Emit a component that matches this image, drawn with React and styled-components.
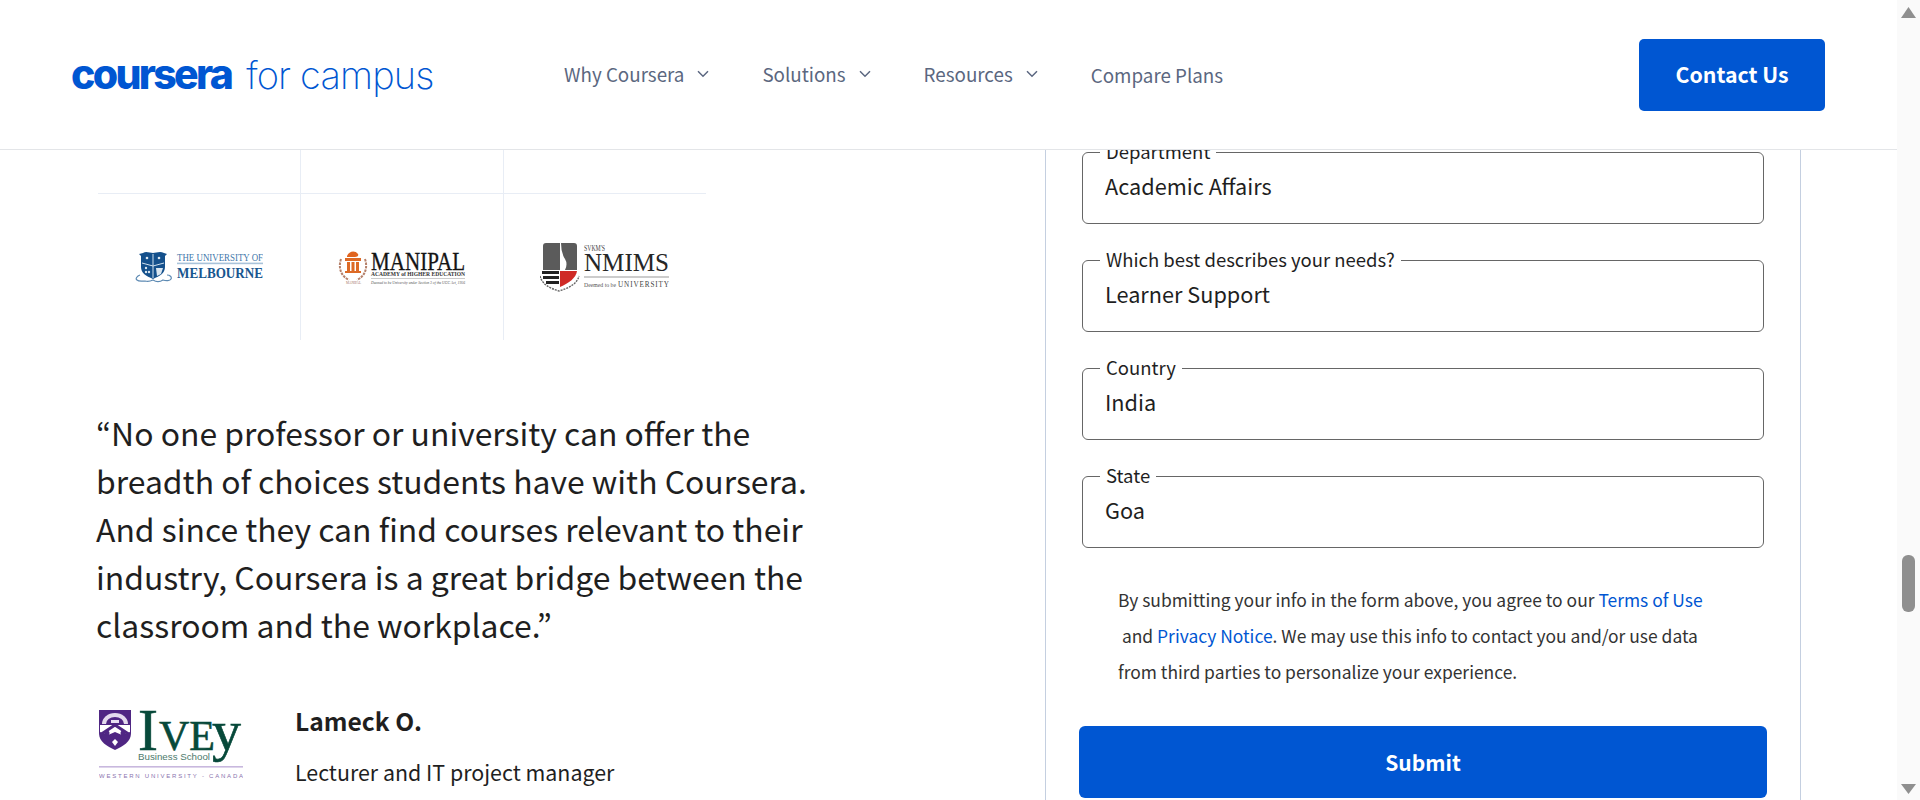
import React from "react";
import styled, { createGlobalStyle } from "styled-components";

const SANS = `"Noto Sans CJK KR", "Noto Sans", sans-serif`;

const Global = createGlobalStyle`
  html, body { margin: 0; padding: 0; height: 800px; overflow: hidden; background: #fff; }
  * { box-sizing: border-box; }
  body { font-family: ${SANS}; color: #1f1f1f; }
`;

const Shell = styled.div`display: flex; width: 1920px; height: 800px;`;
const Page = styled.div`width: 1897px; height: 800px; display: flex; flex-direction: column;`;

const Header = styled.header`
  height: 150px; flex: none; display: flex; align-items: center;
  padding: 0 72px; border-bottom: 1px solid #e3e5e8; background: #fff;
`;
const Brand = styled.div`display: flex; align-items: baseline; width: 360px; flex: none; white-space: nowrap; margin-top: -1px; margin-left: -1px;`;
const BrandBold = styled.span`
  font-family: "Inter", sans-serif; font-weight: 800; font-size: 41px; line-height: 48px;
  color: #0056d2; letter-spacing: -2.7px;
`;
const BrandLight = styled.span`
  font-family: "Inter", sans-serif; font-weight: 200; font-size: 38px; line-height: 48px;
  color: #0056d2; margin-left: 15px; letter-spacing: -.85px;
`;
const Nav = styled.nav`display: flex; align-items: center; gap: 53px; margin-left: 133px;`;
const NavItem = styled.a`
  display: flex; align-items: center; gap: 13px; font-size: 18.8px; line-height: 28px; color: #5b6780;
  margin-top: ${p => (p.$plain ? "1px" : "-1px")};
`;
const ContactButton = styled.button`
  margin-left: auto; width: 186px; height: 72px; border: 0; padding: 0 0 2px; border-radius: 5px; background: #0056d2;
  color: #fff; font: 700 21.3px/28px ${SANS};
`;

const Main = styled.main`flex: 1; display: flex; overflow: hidden; min-height: 0;`;
const Left = styled.section`width: 1045px; flex: none; padding-left: 98px;`;
const LogoGrid = styled.div`
  width: 608px; display: grid; grid-template-columns: 203px 203px 202px; grid-template-rows: 44px 146px;
`;
const LogoCell = styled.div`
  display: flex; align-items: center; justify-content: center;
  border-right: ${p => (p.$last ? "0" : "1px solid #e8edf5")};
  border-bottom: ${p => (p.$top ? "1px solid #e8edf5" : "0")};
`;
const Quote = styled.blockquote`
  margin: 68px 0 0 -2px; width: 720px; font-size: 31.9px; line-height: 48px; color: #1f1f1f;
`;
const Author = styled.div`display: flex; margin-top: 61px; margin-left: 1px;`;
const AuthorText = styled.div`margin-left: 52px; margin-top: -6px;`;
const AuthorName = styled.div`font-size: 24.6px; font-weight: 700; line-height: 34px; color: #1f1f1f;`;
const AuthorRole = styled.div`font-size: 21.4px; line-height: 30px; margin-top: 20px; color: #1f1f1f;`;

const Card = styled.section`
  width: 756px; flex: none; border-left: 1px solid #c4cfe0; border-right: 1px solid #c4cfe0;
  padding: 0 33px;
`;
const Form = styled.form`display: flex; flex-direction: column; margin-top: -11px;`;
const Field = styled.fieldset`
  margin: 0 3px 23px 3px; padding: 0 0 0 16px; height: 85px; border: 1px solid #666; border-radius: 6px; min-width: 0;
`;
const Legend = styled.legend`
  padding: 0 6px 2px; margin-left: 1px; font-size: 18.5px; line-height: 24px; color: #1f1f1f;
`;
const Value = styled.div`font-size: 21.7px; line-height: 30px; margin-top: 6px; padding-left: 6px; color: #1f1f1f;`;
const Terms = styled.p`
  margin: 11px 0 0; padding-left: 39px; font-size: 17.45px; line-height: 36px; color: #333; white-space: nowrap;
`;
const TermLink = styled.a`color: #0056d2;`;
const Submit = styled.button`
  margin: 36px 0 0; height: 72px; border: 0; border-radius: 6px; background: #0056d2; color: #fff;
  font: 700 21px/28px ${SANS}; width: 688px;
`;

const Scrollbar = styled.aside`
  width: 23px; flex: none; height: 800px; background: #fafafa; display: flex; flex-direction: column;
  align-items: center; justify-content: space-between; padding: 7px 0 6px; position: relative;
`;
const Thumb = styled.div`
  position: absolute; left: 5px; top: 555px; width: 13px; height: 57px; border-radius: 6px; background: #8f8f8f;
`;

const SERIF = "Liberation Serif, serif";
const Chevron = () => (
  <svg width="12" height="8" viewBox="0 0 12 8" fill="none" stroke="#5b6780" strokeWidth="1.5"><path d="M1 1.2l5 5 5-5" /></svg>
);

const Melbourne = () => (
  <svg width="128" height="32" viewBox="0 0 128 32">
    <path d="M5 24c-3 1-5 4-3 5 2 2 6 1 8 1 3 1 6 0 8-1 3 2 7 2 10 0 3 1 7 1 8-1 1-2-1-4-4-4" fill="none" stroke="#5d8ab3" strokeWidth="1.2" />
    <path d="M8 2c3-2 7 0 10 0s7-2 11 0l3 1-2 2v11c0 6-5 9-12 12C11 25 6 22 6 16V5L4 3z" fill="#14508c" />
    <path d="M18 3v24" stroke="#cfe0ee" strokeWidth="1" />
    <path d="M7 12l11 3 11-3" stroke="#cfe0ee" strokeWidth="1" fill="none" />
    <circle cx="12" cy="7" r="1.3" fill="#dbe7f1" /><circle cx="24" cy="7" r="1.3" fill="#dbe7f1" />
    <circle cx="11" cy="17" r="1.2" fill="#dbe7f1" /><circle cx="14" cy="21" r="1.2" fill="#dbe7f1" /><circle cx="11" cy="21" r="1.2" fill="#dbe7f1" />
    <path d="M21 17h7l-2 6-4 2z" fill="#dbe7f1" />
    <text x="42" y="10" fontFamily={SERIF} fontSize="11" fill="#3f78ab" textLength="86" lengthAdjust="spacingAndGlyphs">THE UNIVERSITY OF</text>
    <rect x="42" y="11.6" width="86" height="1.6" fill="#a9c3da" />
    <text x="42" y="27" fontFamily={SERIF} fontWeight="700" fontSize="15" fill="#17568f" textLength="86" lengthAdjust="spacingAndGlyphs">MELBOURNE</text>
  </svg>
);

const Manipal = () => (
  <svg width="128" height="35" viewBox="0 0 128 35">
    <g fill="none" stroke="#b5806a" strokeWidth="2" strokeDasharray="2.5 1">
      <path d="M3 9c-3 9 0 17 8 21" /><path d="M27 9c3 9 0 17-8 21" />
    </g>
    <path d="M9 6c2-5 8-6 11-2 1 2-1 3-3 3H9z" fill="#e0641f" />
    <path d="M7 8h16v3H7z" fill="#dd6a26" />
    <path d="M9 12h3v9H9zM13.5 12h3v9h-3zM18 12h3v9h-3z" fill="#dd6a26" />
    <path d="M7 21h16v2H7z" fill="#dd6a26" />
    <text x="8" y="33.5" fontFamily={SERIF} fontSize="3.4" fill="#a5775f" textLength="15">MANIPAL</text>
    <text x="33" y="20" fontFamily={SERIF} fontSize="25" stroke="#141414" strokeWidth=".3" fill="#141414" textLength="94" lengthAdjust="spacingAndGlyphs">MANIPAL</text>
    <text x="33" y="26" fontFamily={SERIF} fontWeight="700" fontSize="6.2" fill="#333" textLength="94" lengthAdjust="spacingAndGlyphs">ACADEMY of HIGHER EDUCATION</text>
    <rect x="33" y="28" width="94" height=".7" fill="#b5b5b5" />
    <text x="33" y="33.5" fontFamily={SERIF} fontStyle="italic" fontSize="4.4" fill="#555" textLength="94" lengthAdjust="spacingAndGlyphs">Deemed to be University under Section 3 of the UGC Act, 1956</text>
  </svg>
);

const Nmims = () => (
  <svg width="130" height="49" viewBox="0 0 130 49">
    <path d="M3 3q0-3 3-3h14v27H3z" fill="#5b5b5b" />
    <path d="M21 0h13q3 0 3 3v24H25q3-6 0-11-4-6-4-16z" fill="#5b5b5b" />
    <path d="M2 28h17v3H2zM3 33h16v3H3zM6 38h13v3H6z" fill="#222" />
    <path d="M20 28h17c-1 7-8 12-17 16z" fill="#cf2a26" />
    <path d="M0 33c2 8 9 12 19 15 10-3 18-7 20-15" fill="none" stroke="#666" strokeWidth="1.4" strokeDasharray="2 1" />
    <text x="44" y="8" fontFamily={SERIF} fontSize="7.5" fill="#444" textLength="21" lengthAdjust="spacingAndGlyphs">SVKM'S</text>
    <text x="44" y="28" fontFamily={SERIF} fontSize="26" fill="#262626" textLength="85" lengthAdjust="spacingAndGlyphs">NMIMS</text>
    <rect x="44" y="33.5" width="85" height="1" fill="#999" />
    <text x="44" y="44" fontFamily={SERIF} fontSize="6" fill="#555" textLength="32" lengthAdjust="spacingAndGlyphs">Deemed to be</text>
    <text x="78" y="44" fontFamily={SERIF} fontSize="7.2" fill="#444" textLength="51">UNIVERSITY</text>
  </svg>
);

const Ivey = () => (
  <svg width="144" height="70" viewBox="0 0 144 70">
    <path d="M0 1h32v23c0 9-8 13-16 17C8 37 0 33 0 24z" fill="#4f2683" />
    <path d="M3 15a13 11 0 0 1 26 0z" fill="#f3eef8" opacity=".9" />
    <path d="M7 15a9 7 0 0 1 18 0z" fill="#4f2683" />
    <path d="M12 11h8v3h-8z" fill="#e8e0f2" />
    <path d="M1 16h30v7l-8 3-7-3-7 3-8-3z" fill="#fff" />
    <path d="M16 16l-15 10M16 16l15 10" stroke="#4f2683" strokeWidth="3" />
    <circle cx="8" cy="24" r="2.5" fill="#4f2683" /><circle cx="24" cy="24" r="2.5" fill="#4f2683" />
    <path d="M16 30l3 3-3 4-3-4z" fill="#fff" />
    <text x="39" y="41" fontFamily={SERIF} fill="#07493a" stroke="#07493a" strokeWidth=".6">
      <tspan fontSize="60">I</tspan><tspan fontSize="42" dx="1">VE</tspan><tspan fontSize="58" dx="-3">y</tspan>
    </text>
    <text x="39" y="51" fontFamily="Liberation Sans, sans-serif" fontSize="9" fill="#4d7a6c" textLength="72" lengthAdjust="spacingAndGlyphs">Business School</text>
    <rect y="57" width="144" height="1.6" fill="#c8b8de" />
    <text x="0" y="69" fontFamily="Liberation Sans, sans-serif" fontSize="6" fill="#8a72ae" textLength="144">WESTERN UNIVERSITY - CANADA</text>
  </svg>
);

const fields = [
  ["Department", "Academic Affairs"],
  ["Which best describes your needs?", "Learner Support"],
  ["Country", "India"],
  ["State", "Goa"],
];

export default function App() {
  return (
    <Shell>
      <Global />
      <Page>
        <Header>
          <Brand><BrandBold>coursera</BrandBold><BrandLight>for campus</BrandLight></Brand>
          <Nav>
            <NavItem>Why Coursera <Chevron /></NavItem>
            <NavItem>Solutions <Chevron /></NavItem>
            <NavItem>Resources <Chevron /></NavItem>
            <NavItem $plain>Compare Plans</NavItem>
          </Nav>
          <ContactButton>Contact Us</ContactButton>
        </Header>
        <Main>
          <Left>
            <LogoGrid>
              <LogoCell $top /><LogoCell $top /><LogoCell $top $last />
              <LogoCell><Melbourne /></LogoCell>
              <LogoCell><Manipal /></LogoCell>
              <LogoCell $last><Nmims /></LogoCell>
            </LogoGrid>
            <Quote>“No one professor or university can offer the<br />breadth of choices students have with Coursera.<br />And since they can find courses relevant to their<br />industry, Coursera is a great bridge between the<br />classroom and the workplace.”</Quote>
            <Author>
              <Ivey />
              <AuthorText>
                <AuthorName>Lameck O.</AuthorName>
                <AuthorRole>Lecturer and IT project manager</AuthorRole>
              </AuthorText>
            </Author>
          </Left>
          <Card>
            <Form>
              {fields.map(([label, value]) => (
                <Field key={label}>
                  <Legend>{label}</Legend>
                  <Value>{value}</Value>
                </Field>
              ))}
              <Terms>
                By submitting your info in the form above, you agree to our <TermLink>Terms of Use</TermLink><br />
                &nbsp;and <TermLink>Privacy Notice</TermLink>. We may use this info to contact you and/or use data<br />
                from third parties to personalize your experience.
              </Terms>
              <Submit type="button">Submit</Submit>
            </Form>
          </Card>
        </Main>
      </Page>
      <Scrollbar>
        <svg width="15" height="11" viewBox="0 0 15 11"><path d="M7.5 0L15 11H0z" fill="#8f8f8f" /></svg>
        <Thumb />
        <svg width="15" height="10" viewBox="0 0 15 10"><path d="M0 0h15L7.5 10z" fill="#8f8f8f" /></svg>
      </Scrollbar>
    </Shell>
  );
}
